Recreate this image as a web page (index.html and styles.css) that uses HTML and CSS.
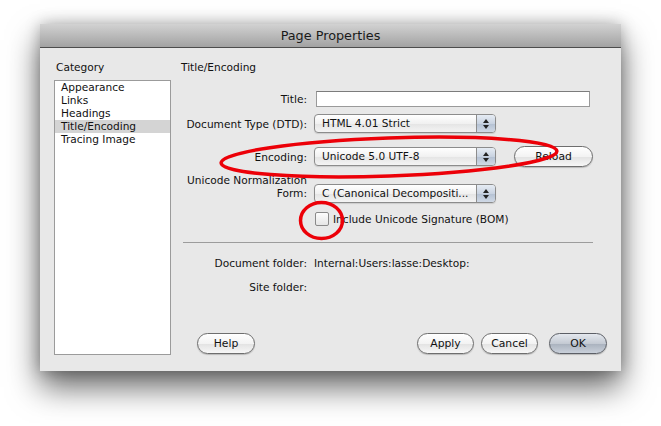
FILE: index.html
```html
<!DOCTYPE html>
<html lang="en">
<head>
    <meta charset="UTF-8">
    <title>Page Properties</title>
    <link rel="stylesheet" href="styles.css">
</head>
<body>
    <div class="dialog">
      <div class="titlebar">Page Properties</div>
      <div class="content">
        <div class="sidebar">
          <div class="heading">Category</div>
          <ul class="category-list">
            <li>Appearance</li>
            <li>Links</li>
            <li>Headings</li>
            <li class="selected">Title/Encoding</li>
            <li>Tracing Image</li>
          </ul>
        </div>

        <div class="panel">
          <div class="heading">Title/Encoding</div>

          <div class="row row-title">
            <label class="lbl">Title:</label>
            <input type="text" class="text-input">
          </div>

          <div class="row row-dtd">
            <label class="lbl">Document Type (DTD):</label>
            <div class="popup"><span class="popup-text">HTML 4.01 Strict</span><span class="popup-arrows"></span></div>
          </div>

          <div class="row row-enc">
            <label class="lbl">Encoding:</label>
            <div class="popup"><span class="popup-text">Unicode 5.0 UTF-8</span><span class="popup-arrows"></span></div>
            <button type="button" class="btn btn-reload">Reload</button>
          </div>

          <div class="row row-norm">
            <label class="lbl lbl-two">Unicode Normalization<br>Form:</label>
            <div class="popup"><span class="popup-text">C (Canonical Decompositi...</span><span class="popup-arrows"></span></div>
          </div>

          <div class="row row-bom">
            <span class="lbl"></span>
            <span class="checkbox"></span>
            <span class="check-label">Include Unicode Signature (BOM)</span>
          </div>

          <div class="separator"></div>

          <div class="row row-info">
            <span class="lbl">Document folder:</span>
            <span class="value">Internal:Users:lasse:Desktop:</span>
          </div>

          <div class="row row-info row-site">
            <span class="lbl">Site folder:</span>
            <span class="value"></span>
          </div>

          <div class="buttons">
            <button type="button" class="btn btn-help">Help</button>
            <div class="buttons-right">
              <button type="button" class="btn">Apply</button>
              <button type="button" class="btn">Cancel</button>
              <button type="button" class="btn btn-default">OK</button>
            </div>
          </div>
        </div>
      </div>
    </div>

    <!-- hand-drawn marks over the dialog -->
    <svg class="marks" width="661" height="426" viewBox="0 0 661 426">
      <ellipse cx="389" cy="157" rx="168" ry="19" transform="rotate(-2 389 157)" />
      <ellipse cx="321.5" cy="220.5" rx="21" ry="18" />
    </svg>
</body>
</html>
```

FILE: styles.css
```css
body {
    margin: 0;
    background: #fff;
    font-family: 'DejaVu Sans', Verdana, sans-serif;
    font-size: 10.6px;
    color: #111;
    width: 661px;
    height: 426px;
    overflow: hidden;
    position: relative;
}

.dialog {
    position: relative;
    margin: 24px 0 0 40px;
    width: 581px;
    height: 347px;
    background: #e8e8e8;
    box-shadow: 0 16px 30px rgba(0,0,0,0.6), 0 0 14px rgba(0,0,0,0.25);
    display: flex;
    flex-direction: column;
}

.titlebar {
    height: 23px;
    line-height: 23px;
    text-align: center;
    font-size: 12.8px;
    color: #1a1a1a;
    background: linear-gradient(#d2d2d2, #a2a2a2);
    border-bottom: 1px solid #4c4c4c;
}

.content {
    flex: 1;
    display: flex;
    padding-top: 12px;
}

.heading { height: 14px; line-height: 14px; }

.sidebar {
    width: 117px;
    margin-left: 14px;
    padding-bottom: 16px;
    display: flex;
    flex-direction: column;
}
.sidebar .heading { padding-left: 2px; }

.category-list {
    flex: 1;
    list-style: none;
    margin: 6px 0 0 0;
    padding: 0;
    background: #fff;
    border: 1px solid #9b9b9b;
}
.category-list li {
    height: 13px;
    line-height: 13px;
    padding-left: 6px;
}
.category-list li.selected { background: #d4d4d4; }

.panel {
    flex: 1;
    margin-left: 10px;
    padding-right: 14px;
    padding-bottom: 17px;
    display: flex;
    flex-direction: column;
}

.row {
    display: flex;
    align-items: center;
}
.lbl {
    width: 126px;
    flex: none;
    text-align: right;
    margin-right: 7px;
    line-height: 14px;
}

.row-title { margin-top: 17px; height: 16px; }
.row-dtd { margin-top: 7px; height: 19px; }
.row-enc { margin-top: 13px; height: 21px; }
.row-norm { margin-top: 7px; height: 29px; align-items: flex-end; }
.row-bom { margin-top: 9px; height: 14px; }
.row-info { margin-top: 13px; height: 14px; }
.row-site { margin-top: 10px; }

.lbl-two { line-height: 13px; padding-bottom: 3px; }

.text-input {
    margin: 0 0 0 2px;
    width: 274px;
    height: 16px;
    box-sizing: border-box;
    border: 1px solid #9a9a9a;
    border-top-color: #7c7c7c;
    background: #fff;
    padding: 0;
}

.popup {
    width: 182px;
    height: 19px;
    box-sizing: border-box;
    border: 1px solid #8c8c8c;
    border-radius: 4px;
    background: linear-gradient(#ffffff, #f1f1f1 50%, #e4e4e4 51%, #f4f4f4);
    display: flex;
    overflow: hidden;
    box-shadow: 0 1px 1px rgba(0,0,0,0.12);
}
.popup-text {
    flex: 1;
    padding-left: 7px;
    line-height: 17px;
    white-space: nowrap;
}
.popup-arrows {
    width: 18px;
    border-left: 1px solid #8c8c8c;
    background: linear-gradient(#e6ecf4, #c9d3e1 50%, #b3c0d2 51%, #d0d9e6);
    position: relative;
}
.popup-arrows::before,
.popup-arrows::after {
    content: "";
    position: absolute;
    left: 6px;
    border-left: 3px solid transparent;
    border-right: 3px solid transparent;
}
.popup-arrows::before { top: 4px; border-bottom: 4px solid #222; }
.popup-arrows::after { top: 10px; border-top: 4px solid #222; }

.btn {
    font-family: inherit;
    font-size: 10.8px;
    color: #111;
    height: 21px;
    width: 57px;
    padding: 0;
    border: 1px solid #6e6e6e;
    border-radius: 11px;
    background: linear-gradient(#ffffff, #f3f3f3 50%, #e2e2e2 51%, #f7f7f7);
    box-shadow: 0 1px 1px rgba(0,0,0,0.2);
}
.btn-reload { width: 79px; margin-left: 18px; }
.btn-help { width: 58px; margin-left: 16px; }
.btn-default {
    width: 58px;
    margin-left: 4px;
    background: linear-gradient(#e4e8ee, #c4cad3 50%, #a9b1bd 51%, #c9d0da);
    border-color: #5c5f66;
}

.checkbox {
    width: 14px;
    height: 14px;
    box-sizing: border-box;
    margin-left: 1px;
    border: 1px solid #8a8a8a;
    border-radius: 2px;
    background: linear-gradient(#fdfdfd, #e6e6e6);
}
.check-label { margin-left: 4px; }

.separator {
    margin: 16px 14px 0 2px;
    height: 1px;
    background: #9c9c9c;
}

.buttons {
    margin-top: auto;
    display: flex;
    justify-content: space-between;
}
.buttons-right { display: flex; gap: 7px; }

.marks {
    position: absolute;
    left: 0;
    top: 0;
    pointer-events: none;
}
.marks ellipse {
    fill: none;
    stroke: #ec0008;
    stroke-width: 3.5;
}
```
